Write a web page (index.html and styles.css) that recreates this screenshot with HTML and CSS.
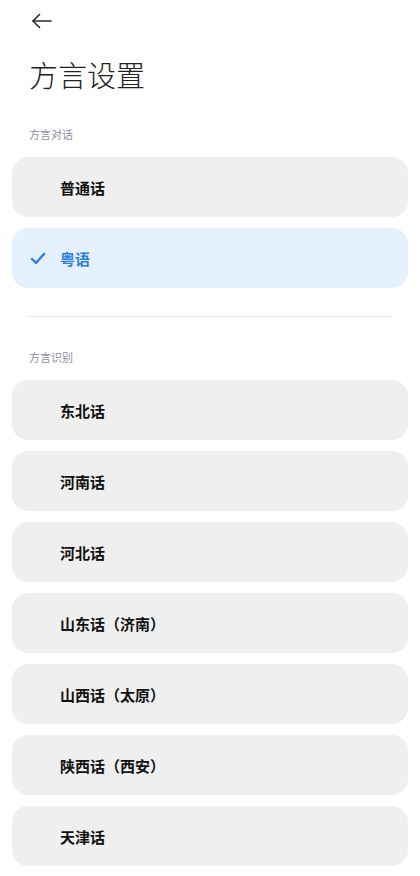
FILE: index.html
```html
<!DOCTYPE html>
<html lang="zh-CN">
<head>
  <meta charset="UTF-8">
  <title>方言设置</title>
  <link rel="stylesheet" href="styles.css">
</head>
<body>
  <div class="page">
    <a href="#" class="volver">
      <svg width="26" height="20" viewBox="0 0 26 20" fill="none" stroke="#2a2a2a" stroke-width="1.6" stroke-linecap="round" stroke-linejoin="round">
        <path d="M22 10H4"/>
        <path d="M10.5 3.5L4 10l6.5 6.5"/>
      </svg>
    </a>

    <h1>方言设置</h1>

    <div class="seccion">方言对话</div>
    <div class="listado">
      <div class="opcion"><span class="marca"></span>普通话</div>
      <div class="opcion activa">
        <span class="marca">
          <svg width="16" height="13" viewBox="0 0 16 13" fill="none" stroke="#2b82e4" stroke-width="2.4" stroke-linecap="round" stroke-linejoin="round">
            <path d="M2 7l4 4 8-9"/>
          </svg>
        </span>粤语
      </div>
    </div>

    <hr class="separador">

    <div class="seccion">方言识别</div>
    <div class="listado">
      <div class="opcion"><span class="marca"></span>东北话</div>
      <div class="opcion"><span class="marca"></span>河南话</div>
      <div class="opcion"><span class="marca"></span>河北话</div>
      <div class="opcion"><span class="marca"></span>山东话（济南）</div>
      <div class="opcion"><span class="marca"></span>山西话（太原）</div>
      <div class="opcion"><span class="marca"></span>陕西话（西安）</div>
      <div class="opcion"><span class="marca"></span>天津话</div>
    </div>
  </div>
</body>
</html>
```

FILE: styles.css
```css
body {
  margin: 0;
  background: #fff;
  font-family: "Noto Sans CJK SC", "Noto Sans", sans-serif;
  color: #111;
}
.page {
  padding: 0 12px;
}
a.volver {
  display: block;
  width: 26px;
  height: 20px;
  margin: 11px 0 0 17px;
}
a.volver svg {
  display: block;
}
h1 {
  margin: 23px 0 0 17px;
  font-size: 29px;
  line-height: 40px;
  font-weight: 300;
  color: #222;
}
.seccion {
  margin: 32px 0 0 17px;
  font-size: 11px;
  line-height: 16px;
  color: #8f8fa6;
}
.listado {
  display: flex;
  flex-direction: column;
  gap: 11px;
  margin-top: 15px;
}
.opcion {
  display: flex;
  align-items: center;
  height: 60px;
  padding-left: 18px;
  background: #efefef;
  border-radius: 16px;
  font-size: 15px;
  font-weight: 700;
}
.marca {
  display: flex;
  align-items: center;
  width: 30px;
  height: 20px;
}
.opcion.activa {
  background: #e5f1ff;
  color: #2b82e4;
}
.separador {
  margin: 28px 16px 0;
  border: none;
  border-top: 1px solid #e6e6e6;
}
.separador + .seccion {
  margin-top: 32px;
}
.separador + .seccion + .listado {
  margin-top: 15px;
}
```
